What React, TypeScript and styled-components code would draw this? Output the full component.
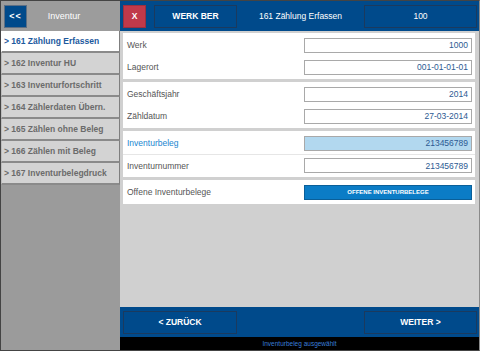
import { FC } from "react";
import styled, { createGlobalStyle } from "styled-components";

const GlobalStyle = createGlobalStyle`
  html, body {
    margin: 0;
    padding: 0;
    background: #fff;
  }
  * {
    box-sizing: border-box;
  }
`;

const menu = [
  "> 161 Zählung Erfassen",
  "> 162 Inventur HU",
  "> 163 Inventurfortschritt",
  "> 164 Zählerdaten Übern.",
  "> 165 Zählen ohne Beleg",
  "> 166 Zählen mit Beleg",
  "> 167 Inventurbelegdruck",
];

interface IField {
  label: string;
  value: string;
  focus?: boolean;
}

const groups: IField[][] = [
  [
    { label: "Werk", value: "1000" },
    { label: "Lagerort", value: "001-01-01-01" },
  ],
  [
    { label: "Geschäftsjahr", value: "2014" },
    { label: "Zähldatum", value: "27-03-2014" },
  ],
  [
    { label: "Inventurbeleg", value: "213456789", focus: true },
    { label: "Inventurnummer", value: "213456789" },
  ],
];

const App: FC = () => {
  return (
    <>
      <GlobalStyle />
      <Screen>
        <Sidebar>
          <SideHeader>
            <BackButton>&lt;&lt;</BackButton>
            <SideTitle>Inventur</SideTitle>
          </SideHeader>
          <Menu>
            {menu.map((m, i) => (
              <MenuItem key={m} active={i === 0}>
                {m}
              </MenuItem>
            ))}
          </Menu>
        </Sidebar>
        <Main>
          <TopBar>
            <CloseButton>X</CloseButton>
            <BarButton width={83}>WERK BER</BarButton>
            <BarTitle>161 Zählung Erfassen</BarTitle>
            <BarButton width={113} regular>
              100
            </BarButton>
          </TopBar>
          <Content>
            {groups.map((g, gi) => (
              <Card key={gi}>
                {g.map((f, fi) => (
                  <Row key={f.label} divided={fi > 0 && !!g[0].focus}>
                    <Label focus={f.focus}>{f.label}</Label>
                    <Input focus={f.focus}>{f.value}</Input>
                  </Row>
                ))}
              </Card>
            ))}
            <Card>
              <Row>
                <Label>Offene Inventurbelege</Label>
                <ActionButton>OFFENE INVENTURBELEGE</ActionButton>
              </Row>
            </Card>
          </Content>
          <BottomBar>
            <BarButton width={114}>&lt; ZURÜCK</BarButton>
            <BarButton width={113}>WEITER &gt;</BarButton>
          </BottomBar>
          <Status>Inventurbeleg ausgewählt</Status>
        </Main>
      </Screen>
    </>
  );
};

export default App;

const blue = "#004a8b";
const font = `"Liberation Sans", Arial, sans-serif`;

const Screen = styled.div`
  width: 480px;
  height: 351px;
  display: flex;
  border: 1px solid #444;
  border-right-color: #8a8a8a;
  font-family: ${font};
  overflow: hidden;
`;

const Sidebar = styled.div`
  width: 119px;
  flex-shrink: 0;
  display: flex;
  flex-direction: column;
  background: #9b9b9b;
`;

const SideHeader = styled.div`
  height: 30px;
  display: flex;
  align-items: center;
  padding: 0 3px;
  background: #9c9c9c;
`;

const BackButton = styled.div`
  width: 23px;
  height: 23px;
  display: flex;
  align-items: center;
  justify-content: center;
  background: ${blue};
  border: 1px solid #5d6f84;
  color: #fff;
  font-weight: bold;
  font-size: 9px;
  letter-spacing: 1px;
`;

const SideTitle = styled.div`
  flex: 1;
  text-align: center;
  color: #fff;
  font-size: 9px;
  padding-right: 16px;
`;

const Menu = styled.div`
  display: flex;
  flex-direction: column;
`;

const MenuItem = styled.div<{ active?: boolean }>`
  height: 22px;
  display: flex;
  align-items: center;
  padding-left: 2px;
  font-size: 8.5px;
  font-weight: bold;
  color: ${(p) => (p.active ? "#1d5a9e" : "#6b6b6b")};
  background: ${(p) => (p.active ? "#fff" : "#d3d3d3")};
  border-right: 1px solid #7f7f7f;
  border-bottom: 2px solid #8a8a8a;
  border-left: 1px solid ${(p) => (p.active ? "#fff" : "#bdbdbd")};
`;

const Main = styled.div`
  flex: 1;
  display: flex;
  flex-direction: column;
`;

const TopBar = styled.div`
  height: 30px;
  display: flex;
  align-items: center;
  padding: 0 2px 0 3px;
  background: ${blue};
`;

const CloseButton = styled.div`
  width: 23px;
  height: 23px;
  margin-right: 8px;
  display: flex;
  align-items: center;
  justify-content: center;
  background: #c0394a;
  border: 1px solid #9a3040;
  color: #fff;
  font-weight: bold;
  font-size: 8.5px;
`;

const BarButton = styled.div<{ width: number; regular?: boolean }>`
  width: ${(p) => p.width}px;
  height: 23px;
  display: flex;
  align-items: center;
  justify-content: center;
  border: 1px solid #1b3a5e;
  color: #fff;
  font-weight: ${(p) => (p.regular ? "normal" : "bold")};
  font-size: 8.5px;
`;

const BarTitle = styled.div`
  flex: 1;
  text-align: center;
  color: #fff;
  font-size: 8.5px;
`;

const Content = styled.div`
  flex: 1;
  display: flex;
  flex-direction: column;
  gap: 3px;
  padding: 2px 4px 0 3px;
  background: #d0d0d0;
`;

const Card = styled.div`
  background: #fff;
  padding: 1px 0;
`;

const Row = styled.div<{ divided?: boolean }>`
  height: 22px;
  display: flex;
  align-items: center;
  padding: 0 3px 0 4px;
  border-top: ${(p) => (p.divided ? "1px solid #e6e6e6" : "none")};
`;

const Label = styled.div<{ focus?: boolean }>`
  flex: 1;
  font-size: 8.5px;
  color: ${(p) => (p.focus ? "#1a86d0" : "#555")};
`;

const Input = styled.div<{ focus?: boolean }>`
  width: 168px;
  height: 15px;
  display: flex;
  align-items: center;
  justify-content: flex-end;
  padding-right: 3px;
  background: ${(p) => (p.focus ? "#b2d8ef" : "#fff")};
  border: 1px solid #a9a9a9;
  color: #2d5a92;
  font-size: 8.5px;
`;

const ActionButton = styled.div`
  width: 168px;
  height: 15px;
  display: flex;
  align-items: center;
  justify-content: center;
  background: #0b7cc6;
  border: 1px solid #0a5f99;
  color: #fff;
  font-weight: bold;
  font-size: 6px;
`;

const BottomBar = styled.div`
  height: 30px;
  display: flex;
  align-items: center;
  justify-content: space-between;
  padding: 0 2px 0 3px;
  background: ${blue};
`;

const Status = styled.div`
  height: 13px;
  display: flex;
  align-items: center;
  justify-content: center;
  background: #000;
  color: #3a7fd8;
  font-size: 6.5px;
`;
